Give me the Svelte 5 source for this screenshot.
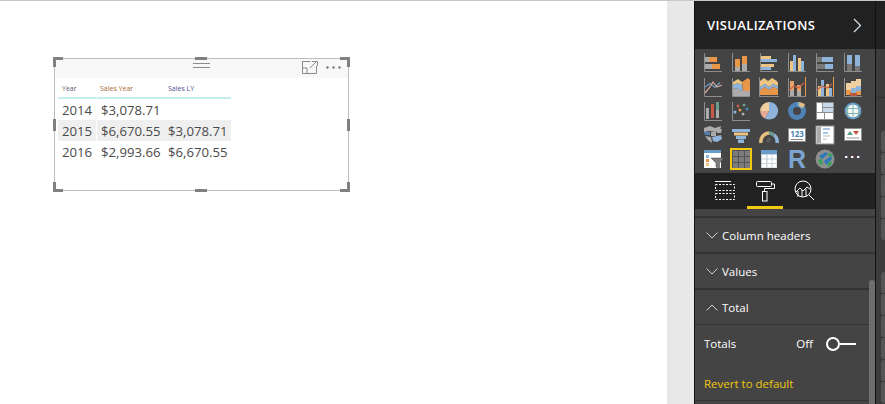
<script>
  const rows = [
    { year: "2014", sales: "$3,078.71", last: "" },
    { year: "2015", sales: "$6,670.55", last: "$3,078.71" },
    { year: "2016", sales: "$2,993.66", last: "$6,670.55" }
  ];
  const sections = ["Column headers", "Values"];
  const railGroups = [5, 6];
</script>

<div class="page">
  <main class="canvas">
    <div class="visual">
      <div class="visual-bar">
        <span class="grip"></span>
        <svg class="focus" width="16" height="13" viewBox="0 0 16 13" fill="none" stroke="#8a8a8a">
          <path d="M8.5 .5H.5V12.5H14.500V5M5 12.500V7H.5M8 7L14.500 .5M10 .5H15.500V5" />
        </svg>
        <svg class="more" width="15" height="3" viewBox="0 0 15 3" fill="#777">
          <circle cx="1.500" cy="1.500" r="1.200" /><circle cx="7.500" cy="1.500" r="1.200" /><circle cx="13.500" cy="1.500" r="1.200" />
        </svg>
      </div>
      <table>
        <thead>
          <tr>
            <th class="c-year">Year</th>
            <th class="c-sales">Sales Year</th>
            <th class="c-last">Sales LY</th>
          </tr>
        </thead>
        <tbody>
          {#each rows as row}
            <tr>
              <td class="first">{row.year}</td>
              <td>{row.sales}</td>
              <td>{row.last}</td>
            </tr>
          {/each}
        </tbody>
      </table>
      <i class="h tl"></i><i class="h tr"></i><i class="h hbl"></i><i class="h br"></i>
      <i class="m mt"></i><i class="m mb"></i><i class="m ml"></i><i class="m mr"></i>
    </div>
  </main>

  <div class="strip"></div>

  <aside class="panel">
    <header class="panel-head">
      <h2>VISUALIZATIONS</h2>
      <svg width="9" height="15" viewBox="0 0 9 15" fill="none" stroke="#d6e4f0" stroke-width="1.200">
        <path d="M1 1L7.500 7.500L1 14" />
      </svg>
    </header>

    <div class="gallery">
      <!-- row 1 -->
      <svg viewBox="0 0 24 24"><path class="ax" d="M3.500 2V20.500H21" /><rect class="gr" x="4" y="6" width="4" height="5" /><rect class="or" x="8" y="6" width="8" height="5" /><rect class="gr" x="4" y="13" width="7" height="5" /><rect class="or" x="11" y="13" width="8" height="5" /></svg>
      <svg viewBox="0 0 24 24"><path class="ax" d="M3.500 2V20.500H21" /><rect class="or" x="6" y="8" width="5" height="8" /><rect class="gr" x="6" y="16" width="5" height="4" /><rect class="or" x="13" y="5" width="5" height="8" /><rect class="gr" x="13" y="13" width="5" height="7" /></svg>
      <svg viewBox="0 0 24 24"><path class="ax" d="M3.500 2V20.500H21" /><rect class="tn" x="4" y="5" width="10" height="3" /><rect class="bl" x="4" y="8" width="16" height="3" /><rect class="tn" x="4" y="13" width="13" height="3" /><rect class="bl" x="4" y="16" width="10" height="3" /></svg>
      <svg viewBox="0 0 24 24"><path class="ax" d="M3.500 2V20.500H21" /><rect class="tn" x="5" y="10" width="3" height="10" /><rect class="bl" x="8" y="4" width="3" height="16" /><rect class="tn" x="13" y="7" width="3" height="13" /><rect class="bl" x="16" y="10" width="3" height="10" /></svg>
      <svg viewBox="0 0 24 24"><path class="ax" d="M3.500 2V20.500H21" /><rect class="dk" x="4" y="6" width="5" height="5" /><rect class="bl" x="9" y="6" width="11" height="5" /><rect class="dk" x="4" y="13" width="8" height="5" /><rect class="bl" x="12" y="13" width="8" height="5" /></svg>
      <svg viewBox="0 0 24 24"><path class="ax" d="M3.500 2V20.500H21" /><rect class="bl" x="6" y="4" width="5" height="9" /><rect class="dk" x="6" y="13" width="5" height="7" /><rect class="bl" x="14" y="4" width="5" height="11" /><rect class="dk" x="14" y="15" width="5" height="5" /></svg>

      <!-- row 2 -->
      <svg viewBox="0 0 24 24"><path class="ax" d="M3.500 3V21.500H21" /><path class="ln" stroke="#6f9ccb" d="M4 12L9 8.500L14 12.500L19 7.500" /><path class="ln" stroke="#d9a79a" d="M4 18L9 12L12 7L16 12L21 10" /></svg>
      <svg viewBox="0 0 24 24"><path class="ax" d="M3.500 3V21.500H21" /><path class="gr" d="M4 13L10 14L14 16L21 16V21H4Z" /><path class="bl" d="M4 10L9 8L13 10L14 16L10 14L4 13Z" /><path class="tn" d="M4 7L9 4L13 7L13 10L9 8L4 10Z" /><path class="or" d="M13 7L19 3L21 5V16H14Z" /></svg>
      <svg viewBox="0 0 24 24"><path class="ax" d="M2.500 2V21.500H22" /><path class="tn" d="M3 6L7 3L11 6L15 3L20 6L21 8V11L16 9L12 12L8 9L3 12Z" /><path class="bl" d="M3 12L8 9L12 12L16 9L21 11V14L16 12L12 15L8 12L3 15Z" /><path class="or" d="M3 15L8 12L12 15L16 12L21 14V20H3Z" /></svg>
      <svg viewBox="0 0 24 24"><path class="ax" d="M3.500 3V21.500H21" /><path class="rt" d="M20.500 2V21" /><rect class="or2" x="5" y="6" width="4" height="9" /><rect class="gr" x="5" y="15" width="4" height="6" /><rect class="or2" x="12" y="10" width="4" height="6" /><rect class="gr" x="12" y="16" width="4" height="5" /><path class="ln" stroke="#c9603f" d="M4 15L9 11L13 13L19 8" /></svg>
      <svg viewBox="0 0 24 24"><path class="ax" d="M3.500 3V21.500H21" /><path class="rt" d="M20.500 2V21" /><rect class="tn" x="5" y="11" width="3" height="10" /><rect class="bl" x="8" y="5" width="3" height="16" /><rect class="tn" x="13" y="9" width="3" height="12" /><rect class="bl" x="16" y="13" width="3" height="8" /><path class="ln" stroke="#c9603f" d="M4 15L9 11L14 13L19 9" /></svg>
      <svg viewBox="0 0 24 24"><path class="ax" d="M3.500 3V21.500H21" /><rect class="or" x="5" y="15" width="5" height="5" /><rect class="tn2" x="5" y="8" width="5" height="7" /><rect class="bl" x="10" y="13" width="5" height="5" /><rect class="tn2" x="10" y="6" width="5" height="7" /><rect class="or" x="15" y="16" width="5" height="4" /><rect class="bl" x="15" y="11" width="5" height="5" /><rect class="tn2" x="15" y="4" width="5" height="7" /><rect class="rd" x="9" y="18" width="7" height="3" /></svg>

      <!-- row 3 -->
      <svg viewBox="0 0 24 24"><path class="ax" d="M3.500 3V21.500H21" /><rect class="gr" x="5" y="9" width="3" height="11" /><rect class="rd2" x="10" y="5" width="3" height="14" /><rect class="gn" x="15" y="3" width="3" height="8" /><rect class="gr" x="15" y="11" width="3" height="8" /></svg>
      <svg viewBox="0 0 24 24"><path class="ax" d="M3.500 3V21.500H21" /><circle class="rd2" cx="9" cy="7" r="1.500" /><circle class="gn" cx="15" cy="6" r="1.500" /><circle class="bl" cx="6" cy="13" r="1.500" /><circle class="or" cx="11" cy="11" r="1.500" /><circle class="bl2" cx="18" cy="10" r="1.500" /><circle class="gr" cx="14" cy="15" r="1.500" /></svg>
      <svg viewBox="0 0 24 24"><path class="bl" d="M12 3A8.800 8.800 0 1 1 8 19.500L12 12Z" /><path class="pk" d="M3.200 12H12L8 19.500A8.800 8.800 0 0 1 3.200 12Z" /><path class="tn2" d="M12 3V12H3.200A8.800 8.800 0 0 1 12 3Z" /></svg>
      <svg viewBox="0 0 24 24"><circle cx="12" cy="12" r="6.500" fill="none" stroke="#4f83b5" stroke-width="5" /><path d="M12 3A9 9 0 0 1 20 7L16 10A5 5 0 0 0 12 7Z" fill="#6a9bc9" /><path d="M14 3L20 5L18 9L14 7Z" fill="#e2c084" /></svg>
      <svg viewBox="0 0 24 24"><rect x="3" y="3" width="18" height="18" fill="#8d8d8d" /><rect x="4" y="4" width="5" height="9" fill="#fff" /><rect x="10" y="4" width="10" height="4" fill="#c7d8ea" /><rect x="10" y="9" width="10" height="4" fill="#c7d8ea" /><rect x="4" y="14" width="7" height="6" fill="#fff" /><rect x="12" y="14" width="8" height="6" fill="#fff" /></svg>
      <svg viewBox="0 0 24 24" fill="none"><circle cx="12" cy="12" r="7.500" fill="#f4f8f6" stroke="#5e92c4" stroke-width="2" /><path stroke="#7fb5ad" d="M4 9.500H20M4 14.500H20M12 4V20M7.500 5.500C6 10 6 14 7.500 18.500M16.500 5.500C18 10 18 14 16.500 18.500" /></svg>

      <!-- row 4 -->
      <svg viewBox="0 0 24 24"><path class="gr" d="M3 5L9 3L14 5L20 3L19 7L15 9L8 8L3 9Z" /><path class="bl2" d="M3 9L9 9V12H4Z" /><path class="gr" d="M10 9H15V13H10ZM16 6L21 6L20 10L16 10Z" /><path class="bl" d="M11 14L20 12L21 16L16 19L12 18Z" /><path class="gr" d="M4 13L10 14L11 20L7 17Z" /></svg>
      <svg viewBox="0 0 24 24"><rect class="bl" x="3" y="6" width="18" height="3" /><rect class="tn" x="5" y="9.500" width="14" height="3" /><rect class="bl" x="7" y="13" width="10" height="3" /><rect class="bl" x="9" y="16.500" width="6" height="3.500" /></svg>
      <svg viewBox="0 0 24 24" fill="none" stroke-width="3.500"><path stroke="#e5bf7f" d="M4 20A8.500 8.500 0 0 1 12 10" /><path stroke="#6a9d8d" d="M12 10A8.500 8.500 0 0 1 17 12" /><path stroke="#8fb4dc" d="M17 12A8.500 8.500 0 0 1 20 20" /><path stroke="#5a5a5a" d="M10 19L13 15" /></svg>
      <div class="tile-card"><b>123</b><span></span></div>
      <svg viewBox="0 0 24 24"><rect x="3" y="3" width="18" height="18" fill="#fff" stroke="#8d8d8d" /><rect class="gr" x="4" y="4" width="4" height="16" /><path stroke="#8fb4dc" stroke-width="1.500" d="M10 6H17M10 10H15" /><path stroke="#bbb" d="M10 13H17M10 16H14" /></svg>
      <svg viewBox="0 0 24 24"><rect x="3.500" y="5.500" width="17" height="12" fill="#fff" stroke="#8d8d8d" /><path d="M6 12L9 8L12 12Z" fill="#5c9b85" /><path d="M12 8H18L15 12Z" fill="#c9503c" /><path stroke="#999" d="M5.500 15H18.500" /></svg>

      <!-- row 5 -->
      <svg viewBox="0 0 24 24"><rect x="3" y="3" width="17" height="18" fill="#fff" /><rect x="3" y="3" width="17" height="3" fill="#6a9bc9" /><rect class="bl" x="5" y="8" width="3" height="3" /><rect class="or" x="5" y="12" width="3" height="3" /><rect class="tn" x="5" y="16" width="3" height="3" /><path d="M10 11H23L18.500 16V22L15 20V16Z" fill="#7a7a7a" stroke="#444" stroke-width=".5" /></svg>
      <div class="tile-matrix">
        {#each Array(9) as _}
          <span></span>
        {/each}
      </div>
      <svg viewBox="0 0 24 24"><rect x="4" y="3" width="16" height="18" fill="#c9d3dc" /><rect x="4" y="3" width="16" height="4" fill="#6a9bc9" />{#each [8, 12.5, 17] as y}{#each [5, 10.5, 15.5] as x}<rect {x} {y} width="4" height="3.500" fill="#fff" />{/each}{/each}</svg>
      <div class="tile-r">R</div>
      <svg viewBox="0 0 24 24"><circle cx="12" cy="12" r="9.500" fill="#8f8f8f" /><path d="M6 9L13 5L15 7L9 12ZM11 14L18 9L19 12L13 18Z" fill="#2a78b8" /><path d="M5 13L9 12L10 17L7 18ZM14 6L19 7L20 10L16 9ZM15 16L19 14L18 18L14 20Z" fill="#3aa35a" /></svg>
      <svg viewBox="0 0 24 24"><rect x="4" y="9" width="2" height="2" fill="#fff" /><rect x="6" y="9" width="1" height="2" fill="#6f8fc0" /><rect x="10" y="9" width="2" height="2" fill="#fff" /><rect x="12" y="9" width="1" height="2" fill="#c96f5f" /><rect x="16" y="9" width="2" height="2" fill="#fff" /><rect x="18" y="9" width="1" height="2" fill="#6f8fc0" /></svg>
    </div>

    <nav class="tabs">
      <div class="tab">
        <svg width="36" height="33" viewBox="0 0 36 33" fill="none" stroke="#fff">
          <path d="M4 8.500H20" />
          <rect x="4.500" y="11.500" width="19" height="6" stroke-dasharray="2 1.500" />
          <rect x="4.500" y="20.500" width="19" height="6" stroke-dasharray="2 1.500" />
        </svg>
      </div>
      <div class="tab active">
        <svg width="36" height="33" viewBox="0 0 36 33" fill="none" stroke="#fff">
          <rect x="9.500" y="8.500" width="15" height="5" rx="1" />
          <path d="M24.500 11H27.500V15.500H17.500V18.500" />
          <rect x="15.500" y="18.500" width="4.500" height="9.500" />
        </svg>
      </div>
      <div class="tab">
        <svg width="36" height="33" viewBox="0 0 36 33" fill="none" stroke="#fff">
          <circle cx="20" cy="16" r="8" />
          <path d="M26 22L31 27M13 19L17 15L20 18L24 14L27 16M15 18V24M19 17V24M23 16V24" />
        </svg>
      </div>
    </nav>

    <div class="options">
      <div class="stub"></div>
      {#each sections as section}
        <div class="section">
          <svg class="chev" width="12" height="7" viewBox="0 0 12 7" fill="none" stroke="#d0d0d0"><path d="M.5 .5L6 6L11.500 .5" /></svg>
          {section}
        </div>
      {/each}
      <div class="section open">
        <svg class="chev" width="12" height="7" viewBox="0 0 12 7" fill="none" stroke="#d0d0d0"><path d="M.5 6.500L6 1L11.500 6.500" /></svg>
        Total
      </div>
      <div class="total-body">
        <div class="toggle-row">
          <span class="toggle-label">Totals</span>
          <span class="toggle-state">Off</span>
          <span class="toggle"><i></i></span>
        </div>
        <div class="revert">Revert to default</div>
      </div>
      <div class="scroll"></div>
    </div>
  </aside>

  <div class="rail">
    <div class="rail-top"></div>
    <div class="rail-mid"></div>
    <div class="rail-body">
      {#each railGroups as count}
        <div class="rail-group">
          {#each Array(count) as _}
            <span></span>
          {/each}
        </div>
      {/each}
    </div>
  </div>
</div>

<style>
  :global(body) {
    margin: 0;
    overflow: hidden;
    background: #fff;
  }
  .page {
    display: flex;
    height: 403px;
    border-top: 1px solid #c8c8c8;
    font-family: "Open Sans", "Liberation Sans", sans-serif;
    overflow: hidden;
  }
  .canvas {
    width: 667px;
    flex: none;
    background: #fff;
    padding: 57px 0 0 54px;
    box-sizing: border-box;
  }
  .visual {
    position: relative;
    width: 295px;
    height: 133px;
    box-sizing: border-box;
    border: 1px solid #bdbdbd;
  }
  .visual-bar {
    position: relative;
    height: 19px;
    background: #f8f8f8;
  }
  .grip {
    position: absolute;
    left: 138px;
    top: 4px;
    width: 17px;
    height: 3px;
    border-top: 1px solid #8a8a8a;
    border-bottom: 1px solid #8a8a8a;
  }
  .focus {
    position: absolute;
    left: 247px;
    top: 2px;
  }
  .more {
    position: absolute;
    left: 271px;
    top: 7px;
  }
  table {
    margin-left: 3px;
    border-collapse: separate;
    border-spacing: 0;
    table-layout: fixed;
    width: 173px;
    color: #4a4a4a;
  }
  th {
    height: 18px;
    padding: 1px 0 0 4px;
    font-size: 7px;
    font-weight: 400;
    text-align: left;
    border-bottom: 2px solid #c4eeee;
    box-sizing: content-box;
  }
  th.c-year {
    width: 34px;
    color: #59596f;
    border-right: 1px solid #fff;
  }
  th.c-sales {
    width: 64px;
    padding-left: 3px;
    color: #a8682e;
  }
  th.c-last {
    color: #4f4f93;
  }
  td {
    height: 21px;
    padding: 1px 0 0 4px;
    box-sizing: border-box;
    font-size: 13.200px;
    white-space: nowrap;
    line-height: 20px;
  }
  td.first {
    border-right: 1px solid #fff;
  }
  tbody tr:nth-child(2) td {
    background: #efefef;
  }
  .h {
    position: absolute;
    width: 10px;
    height: 10px;
    border: 0 solid #808080;
    box-sizing: border-box;
  }
  .tl { left: -2px; top: -2px; border-width: 3px 0 0 3px; }
  .tr { right: -2px; top: -2px; border-width: 3px 3px 0 0; }
  .hbl { left: -2px; bottom: -2px; border-width: 0 0 3px 3px; }
  .br { right: -2px; bottom: -2px; border-width: 0 3px 3px 0; }
  .m {
    position: absolute;
    background: #808080;
  }
  .mt, .mb { left: 140px; width: 12px; height: 3px; }
  .mt { top: -2px; }
  .mb { bottom: -2px; }
  .ml, .mr { top: 60px; width: 3px; height: 12px; }
  .ml { left: -2px; }
  .mr { right: -2px; }

  .strip {
    width: 27px;
    flex: none;
    background: #e8e8e8;
    border-right: 1px solid #111;
  }
  .panel {
    position: relative;
    width: 180px;
    flex: none;
    background: #444;
    color: #fff;
    border-right: 1px solid #111;
  }
  .panel-head {
    display: flex;
    align-items: center;
    justify-content: space-between;
    box-sizing: border-box;
    height: 48px;
    padding: 0 13px 0 12px;
    background: #212121;
  }
  h2 {
    margin: 0;
    font-size: 13px;
    font-weight: 600;
    letter-spacing: .35px;
  }
  .gallery {
    display: grid;
    grid-template-columns: repeat(6, 28px);
    grid-auto-rows: 24px;
    box-sizing: border-box;
    height: 124px;
    padding: 2px 0 0 6px;
    background: #444;
  }
  .gallery svg {
    width: 24px;
    height: 24px;
    display: block;
  }
  .ax { fill: none; stroke: #8d8d8d; }
  .rt { fill: none; stroke: #e8964a; }
  .ln { fill: none; stroke-width: 1.200; }
  .bl { fill: #8fb4dc; }
  .or { fill: #e8964a; }
  .or2 { fill: #eba36a; }
  .gr { fill: #ababab; }
  .dk { fill: #777; }
  .tn { fill: #ecc583; }
  .tn2 { fill: #f0cfa0; }
  .bl2 { fill: #4f83b5; }
  .rd { fill: #b9563c; }
  .rd2 { fill: #c65a48; }
  .gn { fill: #6a9d8d; }
  .pk { fill: #e4a897; }
  .tile-card {
    box-sizing: border-box;
    width: 18px;
    height: 14px;
    margin: 5px 0 0 3px;
    background: #fff;
    border: 1px solid #8d8d8d;
    overflow: hidden;
    text-align: center;
    line-height: 8px;
  }
  .tile-card b {
    display: block;
    height: 8px;
    margin-top: 1px;
    color: #4f83b5;
    font-size: 8px;
    font-weight: 700;
  }
  .tile-card span {
    display: block;
    height: 1px;
    margin: 1px 2px 0;
    background: #888;
  }
  .tile-matrix {
    display: grid;
    grid-template-columns: repeat(3, 5px);
    grid-auto-rows: 5px;
    gap: 1px;
    align-content: center;
    justify-content: center;
    box-sizing: border-box;
    width: 22px;
    height: 22px;
    margin: 1px 0 0 1px;
    border: 2px solid #f2c811;
    background: #555;
  }
  .tile-matrix span {
    background: #7d7d7d;
  }
  .tile-r {
    width: 24px;
    text-align: center;
    color: #7ba4d0;
    font-family: "Liberation Sans", sans-serif;
    font-size: 25px;
    font-weight: 700;
    line-height: 24px;
  }
  .tabs {
    display: flex;
    box-sizing: border-box;
    height: 36px;
    padding-left: 16px;
    background: #212121;
  }
  .tab {
    width: 36px;
    height: 36px;
    box-sizing: border-box;
  }
  .tab.active {
    border-bottom: 3px solid #f2c811;
  }
  .options {
    position: relative;
  }
  .stub {
    height: 7px;
    border-bottom: 2px solid #333;
  }
  .section {
    display: flex;
    align-items: center;
    gap: 4px;
    box-sizing: border-box;
    height: 36px;
    padding-left: 11px;
    font-size: 11.500px;
    border-bottom: 2px solid #333;
  }
  .section.open {
    height: 35px;
    border-bottom: 1px solid #333;
  }
  .total-body {
    height: 75px;
    border-bottom: 1px solid #333;
    padding: 0 9px;
    font-size: 11.500px;
  }
  .toggle-row {
    display: flex;
    align-items: center;
    height: 38px;
  }
  .toggle-label {
    flex: 1;
    margin-top: -2px;
  }
  .toggle-state {
    margin-top: -2px;
  }
  .toggle {
    position: relative;
    display: block;
    width: 30px;
    height: 14px;
    margin: 0 10px 0 13px;
  }
  .toggle i {
    display: block;
    width: 10px;
    height: 10px;
    border: 2px solid #fff;
    border-radius: 50%;
    background: #444;
  }
  .toggle::after {
    content: "";
    position: absolute;
    left: 14px;
    top: 6px;
    width: 16px;
    height: 2px;
    background: #fff;
  }
  .revert {
    margin-top: 13px;
    color: #f2c811;
  }
  .scroll {
    position: absolute;
    right: 0;
    top: 71px;
    width: 6px;
    height: 130px;
    background: #6e6e6e;
    border-radius: 3px 3px 0 0;
  }
  .rail {
    flex: 1;
    background: #3c3c3c;
  }
  .rail-top {
    height: 48px;
    background: #212121;
  }
  .rail-mid {
    height: 48px;
    border-bottom: 1px solid #2e2e2e;
  }
  .rail-body {
    display: flex;
    flex-direction: column;
    gap: 32px;
    padding: 33px 0 0 5px;
  }
  .rail-group {
    display: flex;
    flex-direction: column;
    gap: 1px;
  }
  .rail-group span {
    height: 21px;
    background: #555;
    border-radius: 3px 0 0 3px;
  }
</style>
